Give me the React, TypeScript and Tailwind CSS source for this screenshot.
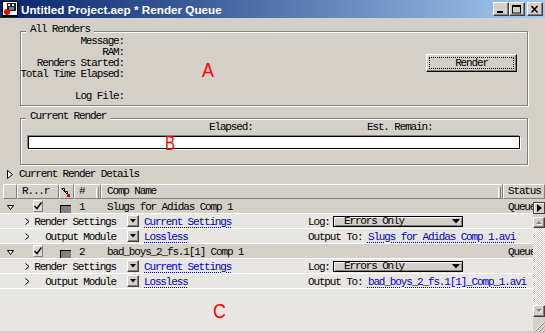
import React from "react";

const raised =
  "bg-[#d4d0c8] border border-t-white border-l-white border-r-[#404040] border-b-[#404040] shadow-[inset_-1px_-1px_0_#808080]";
const etched =
  "border border-[#808080] shadow-[inset_1px_1px_0_#ffffff,1px_1px_0_#ffffff]";
const linkCls =
  "text-[#0000c8] underline decoration-dotted decoration-[#0000c8] underline-offset-[2px]";

function AppIcon() {
  return (
    <svg width="16" height="16" viewBox="0 0 16 16" className="shrink-0">
      <rect x="0" y="0" width="16" height="16" fill="#000" />
      <rect x="1" y="1" width="14" height="14" fill="#fff" />
      <rect x="5" y="2" width="9" height="8" fill="#202020" />
      <rect x="6" y="3" width="2" height="2" fill="#fff" />
      <rect x="10" y="3" width="2" height="2" fill="#fff" />
      <rect x="7" y="6" width="5" height="3" fill="#808080" />
      <circle cx="5" cy="11" r="3" fill="#e00000" />
      <rect x="1" y="14" width="14" height="1" fill="#000" />
    </svg>
  );
}

function WinButton({ kind }: { kind: "min" | "max" | "close" }) {
  return (
    <div className={`w-[16px] h-[14px] flex items-center justify-center ${raised}`}>
      <svg width="10" height="9" viewBox="0 0 10 9">
        {kind === "min" && <rect x="1" y="6" width="6" height="2" fill="#000" />}
        {kind === "max" && (
          <g fill="none" stroke="#000">
            <rect x="0.5" y="0.5" width="8" height="7.5" />
            <line x1="0" y1="1.5" x2="9" y2="1.5" />
          </g>
        )}
        {kind === "close" && (
          <g stroke="#000" strokeWidth="1.6">
            <line x1="1.5" y1="1" x2="7.5" y2="7.5" />
            <line x1="7.5" y1="1" x2="1.5" y2="7.5" />
          </g>
        )}
      </svg>
    </div>
  );
}

function Chevron() {
  return (
    <svg width="5" height="7" viewBox="0 0 5 7">
      <polyline points="0.5,0.5 4,3.5 0.5,6.5" fill="none" stroke="#000" strokeWidth="1" />
    </svg>
  );
}

function SmallDrop() {
  return (
    <div className={`w-[12px] h-[12px] flex items-center justify-center ${raised}`}>
      <svg width="6" height="4" viewBox="0 0 6 4">
        <polygon points="0,0 6,0 3,3.5" fill="#000" />
      </svg>
    </div>
  );
}

function Checkbox() {
  return (
    <div className="w-[10px] h-[12px] border border-t-white border-l-white border-r-[#808080] border-b-[#808080] bg-[#dcd9d2] flex items-center justify-center">
      <svg width="8" height="8" viewBox="0 0 8 8">
        <polyline points="0.5,4 3,6.5 7.5,0.5" fill="none" stroke="#000" strokeWidth="1.5" />
      </svg>
    </div>
  );
}

function CompRow({ num, name }: { num: string; name: string }) {
  return (
    <div className="h-[15px] shrink-0 border-b border-white bg-[#d4d0c8] flex items-start whitespace-nowrap overflow-hidden">
      <div className="w-[17px] shrink-0 pl-[7px] pt-[6px]">
        <svg width="7" height="5" viewBox="0 0 7 5" className="block">
          <polygon points="0.5,0.5 6.5,0.5 3.5,4.5" fill="#fff" stroke="#000" strokeWidth="1" />
        </svg>
      </div>
      <div className="w-[42px] shrink-0 pl-[16px] pt-[1px]">
        <Checkbox />
      </div>
      <div className="w-[15px] shrink-0 pl-[1px] pt-[6px]">
        <div className="w-[11px] h-[8px] bg-[#808080] border-t border-l border-black" />
      </div>
      <div className="w-[27px] shrink-0 pl-[5px] pt-[3px]">{num}</div>
      <div className="w-[402px] shrink-0 pl-[6px] pt-[3px]">{name}</div>
      <div className="flex-1 pl-[5px] pt-[3px] overflow-hidden">Queued</div>
    </div>
  );
}

function SubRow({ label, value, right }: { label: string; value: string; right: React.ReactNode }) {
  return (
    <div className="h-[15px] shrink-0 border-b border-white flex items-start whitespace-nowrap overflow-hidden">
      <div className="w-[308px] shrink-0 flex items-start">
        <div className="w-[30px] shrink-0 pl-[25px] pt-[4px]">
          <Chevron />
        </div>
        <div className="w-[86px] shrink-0 text-right pt-[3px]">{label}</div>
        <div className="w-[11px] shrink-0" />
        <div className="pt-[1px] shrink-0">
          <SmallDrop />
        </div>
        <div className="pl-[5px] pt-[3px]">
          <span className={linkCls}>{value}</span>
        </div>
      </div>
      {right}
    </div>
  );
}

function LogRight() {
  return (
    <div className="flex items-start">
      <span className="w-[25px] pt-[3px]">Log:</span>
      <div className="mt-[2px] w-[130px] h-[11px] border border-black bg-[#d4d0c8] shadow-[inset_1px_1px_0_#ffffff,inset_-1px_-1px_0_#808080] flex items-center pl-[10px] pr-[2px]">
        <span className="flex-1">Errors Only</span>
        <svg width="8" height="5" viewBox="0 0 8 5">
          <polygon points="0,0 8,0 4,4.5" fill="#000" />
        </svg>
      </div>
    </div>
  );
}

function OutRight({ file }: { file: string }) {
  return (
    <div className="pt-[3px]">
      Output To: <span className={linkCls}>{file}</span>
    </div>
  );
}

function HeaderCell({ w, children, className = "" }: { w: string; children?: React.ReactNode; className?: string }) {
  return (
    <div
      className={`${w} h-[15px] shrink-0 border border-t-white border-l-white border-r-[#808080] border-b-[#808080] flex items-start overflow-hidden whitespace-nowrap ${className}`}
    >
      {children}
    </div>
  );
}

function Grip() {
  return <div className="w-[3px] h-[11px] mt-[1px] border-l border-white border-r border-r-[#808080] shrink-0" />;
}

function ScrollArrow({ dir }: { dir: "up" | "down" }) {
  const pts = dir === "up" ? "4,1 7,4 1,4" : "1,1 7,1 4,4";
  const pts2 = dir === "up" ? "5,2 8,5 2,5" : "2,2 8,2 5,5";
  return (
    <svg width="9" height="6" viewBox="0 0 9 6">
      <polygon points={pts2} fill="#ffffff" />
      <polygon points={pts} fill="#808080" />
    </svg>
  );
}

export default function App() {
  return (
    <div className="w-[545px] h-[333px] overflow-hidden bg-[#d4d0c8] flex flex-col text-black text-[11px] leading-[11px] tracking-[-1.15px] [font-family:'Liberation_Mono',monospace] relative">
      {/* Title bar */}
      <div className="h-[18px] shrink-0 flex items-center pl-[2px] pr-[2px] bg-linear-to-r from-[#0a246a] to-[#a6caf0]">
        <AppIcon />
        <span className="ml-[3px] text-white font-bold text-[11.7px] tracking-normal [font-family:'Liberation_Sans',Arial,sans-serif]">
          Untitled Project.aep * Render Queue
        </span>
        <div className="ml-auto flex">
          <WinButton kind="min" />
          <WinButton kind="max" />
          <div className="w-[2px]" />
          <WinButton kind="close" />
        </div>
      </div>

      {/* All Renders */}
      <div className={`shrink-0 mt-[13px] ml-[20px] w-[508px] h-[75px] relative flex ${etched}`}>
        <span className="absolute left-[5px] -top-[8px] px-[4px] bg-[#d4d0c8]">All Renders</span>
        <div className="w-[103px] shrink-0 pt-[4px] flex flex-col items-end whitespace-nowrap">
          <span>Message:</span>
          <span>RAM:</span>
          <span>Renders Started:</span>
          <span>Total Time Elapsed:</span>
          <span className="h-[11px]" />
          <span>Log File:</span>
        </div>
        <div className="flex-1" />
        <div className="pt-[22px] pr-[10px]">
          <div className="w-[91px] h-[18px] bg-[#d4d0c8] border border-t-white border-l-white border-r-black border-b-black shadow-[inset_-1px_-1px_0_#808080] p-[2px]">
            <div className="w-full h-full border border-dotted border-black flex items-center justify-center">
              Render
            </div>
          </div>
        </div>
      </div>

      {/* Current Render */}
      <div className={`shrink-0 mt-[12px] ml-[20px] w-[508px] h-[47px] relative flex flex-col ${etched}`}>
        <span className="absolute left-[5px] -top-[8px] px-[4px] bg-[#d4d0c8] whitespace-nowrap">Current Render</span>
        <div className="pt-[3px] flex whitespace-nowrap">
          <span className="ml-[188px] w-[158px]">Elapsed:</span>
          <span>Est. Remain:</span>
        </div>
        <div className="mt-[3px] mx-[7px] h-[13px] bg-white border border-black shadow-[-1px_-1px_0_#808080,1px_1px_0_#ffffff]" />
      </div>

      {/* Current Render Details */}
      <div className="h-[19px] shrink-0 pt-[4px] flex items-start whitespace-nowrap">
        <div className="h-[11px] flex items-center pl-[7px] w-[19px] shrink-0">
          <svg width="6" height="9" viewBox="0 0 6 9">
            <polygon points="0.5,0.5 5.5,4.5 0.5,8.5" fill="#fff" stroke="#000" strokeWidth="1" />
          </svg>
        </div>
        <span>Current Render Details</span>
      </div>

      {/* List header */}
      <div className="h-[15px] shrink-0 flex pl-[3px]">
        <HeaderCell w="w-[14px]" />
        <HeaderCell w="w-[42px]" className="pl-[4px] pt-[1px]">R...r</HeaderCell>
        <HeaderCell w="w-[15px]" className="pl-[1px] pt-[3px]">
          <svg width="10" height="9" viewBox="0 0 10 9">
            <polyline points="0.5,0.5 3.5,0.5 3.5,3.5 6.5,3.5 6.5,6" fill="none" stroke="#000" strokeWidth="1" />
            <line x1="1" y1="1" x2="6" y2="6" stroke="#000" strokeWidth="1" />
            <rect x="6" y="6" width="3" height="3" fill="#e00000" />
          </svg>
        </HeaderCell>
        <HeaderCell w="w-[27px]" className="pl-[4px] pt-[1px]">
          <span className="flex-1">#</span>
          <Grip />
          <span className="w-[1px]" />
        </HeaderCell>
        <HeaderCell w="w-[402px]" className="pl-[5px] pt-[1px]">
          <span className="flex-1">Comp Name</span>
          <Grip />
          <span className="w-[1px]" />
        </HeaderCell>
        <HeaderCell w="flex-1" className="pl-[4px] pt-[1px]">Status</HeaderCell>
      </div>

      {/* List body + scrollbar */}
      <div className="flex-1 flex min-h-0">
        <div className="flex-1 min-w-0 flex flex-col bg-[#e8e6e2] mb-[2px] overflow-hidden">
          <CompRow num="1" name="Slugs for Adidas Comp 1" />
          <SubRow label="Render Settings" value="Current Settings" right={<LogRight />} />
          <SubRow label="Output Module" value="Lossless" right={<OutRight file="Slugs for Adidas Comp 1.avi" />} />
          <CompRow num="2" name="bad_boys_2_fs.1[1] Comp 1" />
          <SubRow label="Render Settings" value="Current Settings" right={<LogRight />} />
          <SubRow label="Output Module" value="Lossless" right={<OutRight file="bad_boys_2_fs.1[1]_Comp_1.avi" />} />
        </div>
        <div className="w-[12px] shrink-0 flex flex-col bg-[#d4d0c8]">
          <div className="mt-[3px] h-[12px] border border-[#404040] bg-[#d4d0c8] shadow-[inset_1px_1px_0_#ffffff] flex items-center justify-center">
            <svg width="5" height="8" viewBox="0 0 5 8">
              <polygon points="0,0 5,4 0,8" fill="#000" />
            </svg>
          </div>
          <div className={`mt-[3px] h-[11px] flex items-center justify-center ${raised}`}>
            <ScrollArrow dir="up" />
          </div>
          <div className="flex-1 bg-[repeating-conic-gradient(#ffffff_0%_25%,#d4d0c8_0%_50%)] bg-[length:2px_2px]" />
          <div className={`h-[12px] flex items-center justify-center ${raised}`}>
            <ScrollArrow dir="down" />
          </div>
          <div className="h-[16px] flex items-end justify-end">
            <svg width="12" height="12" viewBox="0 0 12 12">
              <g strokeWidth="1">
                <line x1="11" y1="1" x2="1" y2="11" stroke="#ffffff" />
                <line x1="11.5" y1="1.5" x2="1.5" y2="11.5" stroke="#808080" />
                <line x1="11" y1="5" x2="5" y2="11" stroke="#ffffff" />
                <line x1="11.5" y1="5.5" x2="5.5" y2="11.5" stroke="#808080" />
                <line x1="11" y1="9" x2="9" y2="11" stroke="#ffffff" />
                <line x1="11.5" y1="9.5" x2="9.5" y2="11.5" stroke="#808080" />
              </g>
            </svg>
          </div>
        </div>
      </div>

      {/* Annotations */}
      <span className="absolute left-[202px] top-[59px] text-[21px] leading-none tracking-normal text-[#ff0000] [font-family:'Liberation_Sans',Arial,sans-serif] scale-x-[0.85] origin-left">
        A
      </span>
      <span className="absolute left-[165px] top-[133px] text-[20px] leading-none tracking-normal text-[#ff0000] [font-family:'Liberation_Sans',Arial,sans-serif] scale-x-[0.75] origin-left">
        B
      </span>
      <span className="absolute left-[213px] top-[300px] text-[21px] leading-none tracking-normal text-[#ff0000] [font-family:'Liberation_Sans',Arial,sans-serif] scale-x-[0.85] origin-left">
        C
      </span>
    </div>
  );
}
